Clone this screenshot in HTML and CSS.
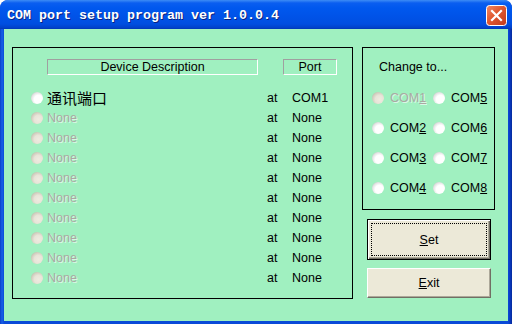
FILE: index.html
```html
<!DOCTYPE html>
<html lang="en">
<head>
  <meta charset="UTF-8">
  <title>COM port setup program</title>
  <link rel="stylesheet" href="styles.css">
</head>
<body>

  <div class="window">
    <div class="titlebar">
      <span class="title">COM port setup program ver 1.0.0.4</span>
      <span class="close">
        <svg width="21" height="21" viewBox="0 0 21 21">
          <defs>
            <linearGradient id="red" x1="0" y1="0" x2="1" y2="1">
              <stop offset="0" stop-color="#f08a66"/>
              <stop offset="0.45" stop-color="#e0582f"/>
              <stop offset="1" stop-color="#c13a1c"/>
            </linearGradient>
          </defs>
          <rect x="0.5" y="0.5" width="20" height="20" rx="3" fill="url(#red)" stroke="#fff"/>
          <path d="M6 6 L15 15 M15 6 L6 15" stroke="#fff" stroke-width="2.2" stroke-linecap="square"/>
        </svg>
      </span>
    </div>

    <div class="client">
      <div class="group devices">
        <div class="head">
          <div class="col-desc">Device Description</div>
          <div class="col-port">Port</div>
        </div>
        <ul class="rows">
          <li class="row"><span class="radio"></span><span class="name cjk">通讯端口</span><span class="at">at</span><span class="port">COM1</span></li>
          <li class="row off"><span class="radio"></span><span class="name">None</span><span class="at">at</span><span class="port">None</span></li>
          <li class="row off"><span class="radio"></span><span class="name">None</span><span class="at">at</span><span class="port">None</span></li>
          <li class="row off"><span class="radio"></span><span class="name">None</span><span class="at">at</span><span class="port">None</span></li>
          <li class="row off"><span class="radio"></span><span class="name">None</span><span class="at">at</span><span class="port">None</span></li>
          <li class="row off"><span class="radio"></span><span class="name">None</span><span class="at">at</span><span class="port">None</span></li>
          <li class="row off"><span class="radio"></span><span class="name">None</span><span class="at">at</span><span class="port">None</span></li>
          <li class="row off"><span class="radio"></span><span class="name">None</span><span class="at">at</span><span class="port">None</span></li>
          <li class="row off"><span class="radio"></span><span class="name">None</span><span class="at">at</span><span class="port">None</span></li>
          <li class="row off"><span class="radio"></span><span class="name">None</span><span class="at">at</span><span class="port">None</span></li>
        </ul>
      </div>

      <div class="side">
        <div class="group change">
          <div class="legend">Change to...</div>
          <div class="coms">
            <label class="com off"><span class="radio"></span>COM<u>1</u></label>
            <label class="com"><span class="radio"></span>COM<u>2</u></label>
            <label class="com"><span class="radio"></span>COM<u>3</u></label>
            <label class="com"><span class="radio"></span>COM<u>4</u></label>
            <label class="com"><span class="radio"></span>COM<u>5</u></label>
            <label class="com"><span class="radio"></span>COM<u>6</u></label>
            <label class="com"><span class="radio"></span>COM<u>7</u></label>
            <label class="com"><span class="radio"></span>COM<u>8</u></label>
          </div>
        </div>
        <button class="btn default"><span class="focus"><u>S</u>et</span></button>
        <button class="btn"><u>E</u>xit</button>
      </div>
    </div>
  </div>

</body>
</html>
```

FILE: styles.css
```css
* {
  box-sizing: border-box;
  margin: 0;
  padding: 0;
}

body {
  width: 512px;
  height: 324px;
  overflow: hidden;
  font-family: 'Liberation Sans', Arial, sans-serif;
  font-size: 12.5px;
  color: #000;
}

.window {
  width: 512px;
  height: 324px;
  display: flex;
  flex-direction: column;
  background: linear-gradient(to right, #0a3ec8 0, #1660e8 2px, #0a4ad8 4px, #0a4ad8 508px, #0838c0 510px, #052a9a 512px);
  border-radius: 8px 8px 0 0;
  padding: 0 4px 3px 4px;
}

/* Title bar */
.titlebar {
  height: 29px;
  margin: 0 -4px;
  padding: 0 5px 0 7px;
  display: flex;
  align-items: center;
  justify-content: space-between;
  border-radius: 8px 8px 0 0;
  background: linear-gradient(to bottom, #3d8cf5 0, #0a5ef0 3px, #0058ee 8px, #0053e8 16px, #004ee0 24px, #0040c8 28px, #0036b0 29px);
}

.title {
  font-family: 'Liberation Mono', 'Courier New', monospace;
  font-weight: bold;
  font-size: 13.33px;
  color: #fff;
  text-shadow: 1px 1px 0 #0a2480;
  margin-top: 1px;
}

.close {
  display: block;
  width: 21px;
  height: 21px;
  margin-top: 2px;
}

.close svg {
  display: block;
}

/* Client area */
.client {
  flex: 1;
  background: #a0f0c0;
  display: flex;
  gap: 9px;
  padding: 18px 0 0 8px;
}

.group {
  border: 1px solid #000;
}

.devices {
  width: 341px;
  height: 252px;
  padding: 11px 0 0 0;
}

.head {
  display: flex;
  gap: 25px;
  padding-left: 34px;
}

.col-desc,
.col-port {
  height: 16px;
  line-height: 14px;
  text-align: center;
  border-top: 1px solid #a0a0a0;
  border-left: 1px solid #a0a0a0;
  border-bottom: 1px solid #fff;
  border-right: 1px solid #fff;
}

.col-desc {
  width: 211px;
}

.col-port {
  width: 54px;
}

.rows {
  list-style: none;
  margin-top: 13px;
}

.row {
  height: 20px;
  display: flex;
  align-items: center;
}

.row .radio {
  margin-left: 18px;
  margin-right: 4px;
}

.name {
  width: 220px;
}

.cjk {
  font-family: 'Noto Sans CJK SC', 'Liberation Sans', sans-serif;
  font-size: 15px;
  line-height: 20px;
}

.at {
  width: 25px;
}

.off .name {
  color: #aba9a2;
  text-shadow: 1px 1px 0 rgba(255, 255, 255, 0.6);
}

/* Radio buttons */
.radio {
  display: inline-block;
  flex: none;
  width: 12px;
  height: 12px;
  border-radius: 50%;
  background: radial-gradient(circle at 62% 62%, #ffffff 0, #ffffff 40%, #e4e4e4 65%, #a9a9a9 100%);
}

.off .radio {
  background: radial-gradient(circle at 62% 62%, #eeebe0 0, #e8e4d8 40%, #d2cebf 65%, #aaa698 100%);
}

/* Change to... box */
.side {
  width: 133px;
  display: flex;
  flex-direction: column;
}

.change {
  height: 163px;
  padding: 12px 0 0 0;
}

.legend {
  padding-left: 16px;
  height: 15px;
  line-height: 15px;
}

.coms {
  display: grid;
  grid-template-rows: repeat(4, 30px);
  grid-template-columns: 61px 60px;
  grid-auto-flow: column;
  margin-top: 8px;
  padding-left: 9px;
}

.com {
  display: flex;
  align-items: center;
}

.com .radio {
  margin-right: 6px;
}

.com.off {
  color: #aba9a2;
  text-shadow: 1px 1px 0 rgba(255, 255, 255, 0.6);
}

/* Buttons */
.btn {
  font-family: 'Liberation Sans', Arial, sans-serif;
  font-size: 12.5px;
  color: #000;
  width: 124px;
  margin-left: 5px;
  background: #ece9d8;
  border: 1px solid;
  border-color: #fff #716f64 #716f64 #fff;
  box-shadow: inset -1px -1px 0 #aca899;
}

.btn.default {
  height: 41px;
  margin-top: 9px;
  padding: 3px;
  border: 1px solid #000;
  box-shadow: inset 1px 1px 0 #fff, inset -1px -1px 0 #716f64, inset -2px -2px 0 #aca899;
}

.focus {
  display: flex;
  align-items: center;
  justify-content: center;
  height: 100%;
  border: 1px dotted #000;
}

.btn:last-child {
  height: 30px;
  margin-top: 8px;
}
```
